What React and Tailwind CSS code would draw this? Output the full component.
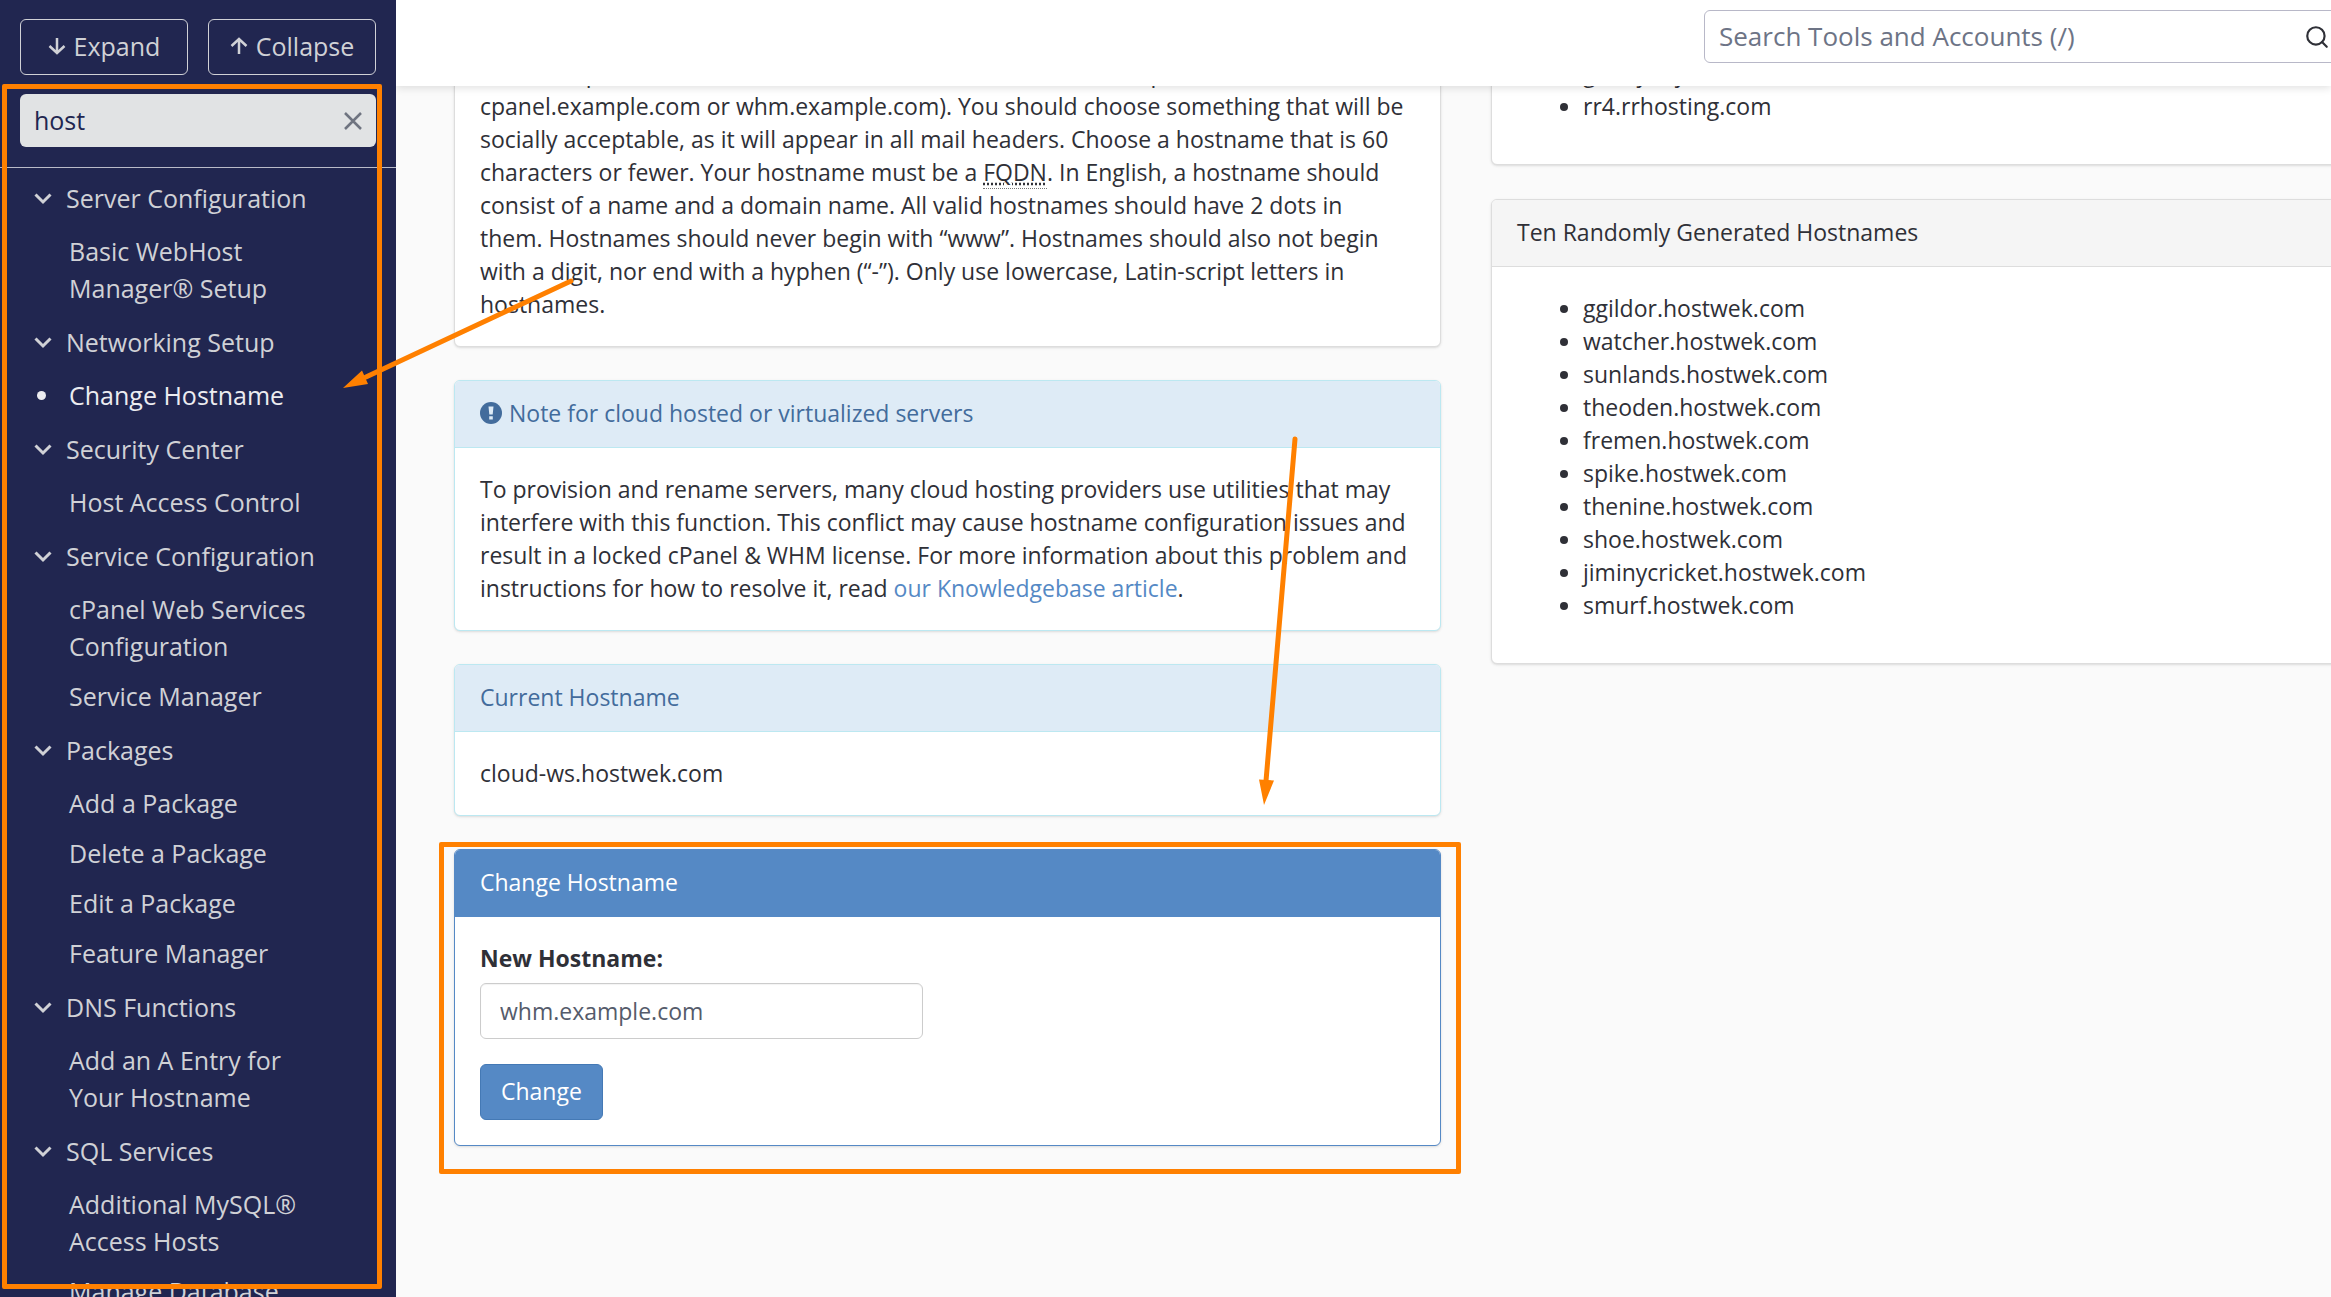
import React, { useState } from 'react';
import { FiSearch } from 'react-icons/fi';

const navGroups = [
  { title: 'Server Configuration', items: ['Basic WebHost Manager® Setup'] },
  { title: 'Networking Setup', items: ['Change Hostname'] },
  { title: 'Security Center', items: ['Host Access Control'] },
  { title: 'Service Configuration', items: ['cPanel Web Services Configuration', 'Service Manager'] },
  { title: 'Packages', items: ['Add a Package', 'Delete a Package', 'Edit a Package', 'Feature Manager'] },
  { title: 'DNS Functions', items: ['Add an A Entry for Your Hostname'] },
  { title: 'SQL Services', items: ['Additional MySQL® Access Hosts', 'Manage Database'] },
];

const sampleHostnames = ['gandybay.hostwek.com', 'rr4.rrhosting.com'];

const randomHostnames = [
  'ggildor.hostwek.com',
  'watcher.hostwek.com',
  'sunlands.hostwek.com',
  'theoden.hostwek.com',
  'fremen.hostwek.com',
  'spike.hostwek.com',
  'thenine.hostwek.com',
  'shoe.hostwek.com',
  'jiminycricket.hostwek.com',
  'smurf.hostwek.com',
];

const ArrowIcon = ({ up }) => (
  <svg
    className={up ? 'h-[18px] w-[18px] rotate-180' : 'h-[18px] w-[18px]'}
    viewBox="0 0 18 18"
    fill="none"
    stroke="currentColor"
    strokeWidth="2.500"
    aria-hidden="true"
  >
    <path d="M9 1v15M1.500 9L9 16 16.500 9" />
  </svg>
);

const ChevronIcon = () => (
  <svg
    className="h-3 w-[18px] shrink-0"
    viewBox="0 0 18 12"
    fill="none"
    stroke="currentColor"
    strokeWidth="3"
    aria-hidden="true"
  >
    <path d="M1.500 1.500L9 9l7.500-7.500" />
  </svg>
);

const NavGroup = ({ title, items, active }) => (
  <li>
    <button type="button" className="flex h-[57px] w-full items-center gap-[14px] pl-[34px] text-left">
      <ChevronIcon />
      <span>{title}</span>
    </button>
    <ul>
      {items.map((item) => (
        <li key={item}>
          <a
            href="#tool"
            className={`flex items-center pt-[6px] pb-[7px] ${item === active ? 'gap-[23px] pl-[37px] text-[#ececf0]' : 'pr-20 pl-[69px]'}`}
          >
            {item === active && <span className="h-[9px] w-[9px] shrink-0 rounded-full bg-[#ececf0]"></span>}
            <span>{item}</span>
          </a>
        </li>
      ))}
    </ul>
  </li>
);

const Sidebar = () => {
  const [query, setQuery] = useState('host');

  return (
    <aside className="w-[396px] shrink-0 overflow-hidden bg-[#212650] text-[25px] leading-[37px] text-[#d0d1d6]">
      <div className="border-b border-[#b9bbc8] px-5 pt-[19px] pb-5">
        <div className="grid grid-cols-2 gap-5">
          <button type="button" className="flex h-14 items-center justify-center gap-2 rounded-md border border-[#d0d1d6] pb-[2px]">
            <ArrowIcon />
            Expand
          </button>
          <button type="button" className="flex h-14 items-center justify-center gap-2 rounded-md border border-[#d0d1d6] pb-[2px]">
            <ArrowIcon up />
            Collapse
          </button>
        </div>
        <div className="mt-[19px] flex h-[53px] items-center rounded-md bg-[#e1e3e4] px-[14px] text-[#212650]">
          <input
            type="text"
            aria-label="Filter tools"
            value={query}
            onChange={(e) => setQuery(e.target.value)}
            className="min-w-0 flex-1 bg-transparent outline-none"
          />
          <button type="button" aria-label="Clear" onClick={() => setQuery('')}>
            <svg className="h-[18px] w-[18px]" viewBox="0 0 18 18" fill="none" stroke="#6f7480" strokeWidth="2.500" aria-hidden="true">
              <path d="M1 1l16 16M17 1L1 17" />
            </svg>
          </button>
        </div>
      </div>
      <nav>
        <ul className="pt-[2px]">
          {navGroups.map((group) => (
            <NavGroup key={group.title} title={group.title} items={group.items} active="Change Hostname" />
          ))}
        </ul>
      </nav>
    </aside>
  );
};

const tones = {
  plain: { card: 'border-[#dddddd]', head: 'border-[#dddddd] bg-[#f5f5f5]' },
  info: { card: 'border-[#bce8f1]', head: 'border-[#bce8f1] bg-[#deebf6] text-[#436c9c]' },
  primary: { card: 'border-[#5589c5]', head: 'border-[#5589c5] bg-[#5589c5] text-white' },
};

const Panel = ({ title, tone = 'plain', children }) => (
  <section className={`overflow-hidden rounded-md border bg-white shadow-sm ${tones[tone].card}`}>
    {title && (
      <h2 className={`flex h-[67px] items-center gap-[7px] border-b px-[25px] pb-[2px] ${tones[tone].head}`}>{title}</h2>
    )}
    <div className="p-[25px]">{children}</div>
  </section>
);

const HostList = ({ hosts }) => (
  <ul className="mb-4 list-disc pl-[66px]">
    {hosts.map((host) => (
      <li key={host}>{host}</li>
    ))}
  </ul>
);

const AlertIcon = () => (
  <svg className="h-[22px] w-[22px]" viewBox="0 0 22 22" aria-hidden="true">
    <circle cx="11" cy="11" r="11" fill="#436c9c" />
    <path d="M8.500 4.500h5l-.8 8h-3.400zM9.200 14.200h3.600v3.300H9.200z" fill="#deebf6" />
  </svg>
);

// Orange guide marks drawn over the page
const Guides = () => (
  <div className="pointer-events-none absolute inset-0 z-20">
    <div className="absolute top-[84px] left-[2px] h-[1205px] w-[380px] rounded-xs border-5 border-[#ff8000]"></div>
    <div className="absolute top-[842px] left-[439px] h-[332px] w-[1022px] rounded-xs border-5 border-[#ff8000]"></div>
    <svg className="absolute top-0 left-0 h-[820px] w-[1310px]" viewBox="0 0 1310 820" fill="#ff8000" stroke="#ff8000" aria-hidden="true">
      <path d="M571 281L366 377M1295 439L1266 781" strokeWidth="5" strokeLinecap="round" />
      <path d="M343 388l19-17.500 6 13.500zM1264 805l-5-25.500 15 1z" stroke="none" />
    </svg>
  </div>
);

const App = () => (
  <div className="relative flex h-screen overflow-hidden bg-[#fafafa] font-['Open_Sans',sans-serif] text-[23px] leading-[33px] text-[#2f3037]">
    <Sidebar />

    <div className="min-w-0 flex-1 overflow-hidden">
      <header className="relative z-10 flex h-[86px] justify-end bg-white pt-[10px] shadow-[0_2px_8px_rgba(0,0,0,0.12)]">
        <div className="-mr-8 flex h-[53px] w-[659px] items-center rounded-md border border-[#b8b8c8] pr-8 pl-[14px]">
          <input
            type="search"
            aria-label="Search Tools and Accounts"
            placeholder="Search Tools and Accounts (/)"
            className="min-w-0 flex-1 text-[26px] outline-none placeholder:text-[#6d7486]"
          />
          <button type="button" aria-label="Search">
            <FiSearch className="h-[26px] w-[26px]" />
          </button>
        </div>
      </header>

      {/* Page is scrolled, so the first panels start under the header */}
      <main className="-mt-[55px] -mr-[147px] grid grid-cols-2 items-start gap-[50px] pl-[58px]">
        <div className="flex flex-col gap-[33px]">
          <Panel>
            <p className="pr-2">
              one example domain of the server’s own, such as a main example.com
              <br />
              cpanel.example.com or whm.example.com). You should choose something that will be socially acceptable, as
              it will appear in all mail headers. Choose a hostname that is 60 characters or fewer. Your hostname must
              be a{' '}
              <abbr title="Fully Qualified Domain Name" className="border-b border-dotted border-[#777777]">FQDN</abbr>.
              In English, a hostname should consist of a name and a domain name. All valid hostnames should have 2 dots
              in them. Hostnames should never begin with “www”. Hostnames should also not begin with a digit, nor end
              with a hyphen (“-”). Only use lowercase, Latin-script letters in hostnames.
            </p>
          </Panel>

          <Panel
            tone="info"
            title={
              <>
                <AlertIcon />
                Note for cloud hosted or virtualized servers
              </>
            }
          >
            <p>
              To provision and rename servers, many cloud hosting providers use utilities that may interfere with this
              function. This conflict may cause hostname configuration issues and result in a locked cPanel &amp; WHM
              license. For more information about this problem and instructions for how to resolve it, read{' '}
              <a href="#article" className="text-[#5589c5]">our Knowledgebase article</a>.
            </p>
          </Panel>

          <Panel tone="info" title="Current Hostname">
            <p>cloud-ws.hostwek.com</p>
          </Panel>

          <Panel tone="primary" title="Change Hostname">
            <form onSubmit={(e) => e.preventDefault()}>
              <label htmlFor="hostname" className="mb-2 block font-bold">New Hostname:</label>
              <input
                id="hostname"
                type="text"
                placeholder="whm.example.com"
                className="mb-[25px] block h-14 w-[443px] rounded-md border border-[#cccccc] px-[19px] inset-shadow-xs outline-none placeholder:text-[#555b6b]"
              />
              <button type="submit" className="block h-14 rounded-md border border-[#4479b5] bg-[#5589c5] px-5 pb-[2px] text-white">
                Change
              </button>
            </form>
          </Panel>
        </div>

        <div className="flex flex-col gap-[34px]">
          <Panel>
            <HostList hosts={sampleHostnames} />
          </Panel>
          <Panel title="Ten Randomly Generated Hostnames">
            <HostList hosts={randomHostnames} />
          </Panel>
        </div>
      </main>
    </div>

    <Guides />
  </div>
);

export default App;
